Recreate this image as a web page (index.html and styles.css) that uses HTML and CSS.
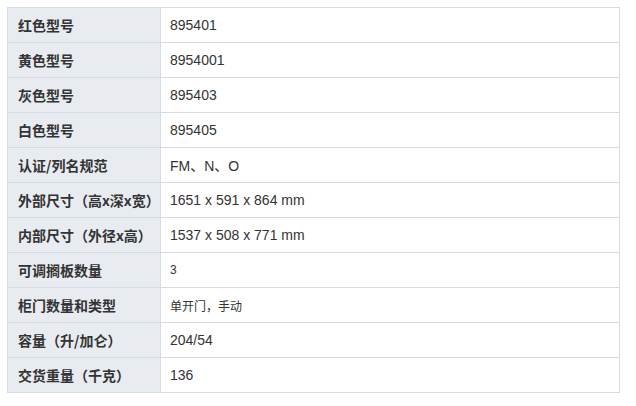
FILE: index.html
```html
<!DOCTYPE html>
<html lang="zh">
<head>
<meta charset="utf-8">
<link rel="stylesheet" href="styles.css">
</head>
<body>
<table class="spec">
  <tr><th>红色型号</th><td>895401</td></tr>
  <tr><th>黄色型号</th><td>8954001</td></tr>
  <tr><th>灰色型号</th><td>895403</td></tr>
  <tr><th>白色型号</th><td>895405</td></tr>
  <tr><th>认证/列名规范</th><td>FM、N、O</td></tr>
  <tr><th>外部尺寸（高x深x宽）</th><td>1651 x 591 x 864 mm</td></tr>
  <tr><th>内部尺寸（外径x高）</th><td>1537 x 508 x 771 mm</td></tr>
  <tr><th>可调搁板数量</th><td class="small">3</td></tr>
  <tr><th>柜门数量和类型</th><td class="small">单开门，手动</td></tr>
  <tr><th>容量（升/加仑）</th><td>204/54</td></tr>
  <tr><th>交货重量（千克）</th><td>136</td></tr>
</table>
</body>
</html>
```
FILE: styles.css
```css
html, body {
  margin: 0;
  padding: 0;
  background: #fff;
}
.spec {
  margin: 7px 0 0 7px;
  width: 613px;
  border-collapse: collapse;
  font-family: "Liberation Sans", Arial, "Noto Sans CJK SC", sans-serif;
  font-size: 14px;
  color: #333;
}
.spec th, .spec td {
  border: 1px solid #d3dce4;
  height: 35px;
  padding: 0 0 0 9px;
  text-align: left;
  vertical-align: middle;
  box-sizing: border-box;
}
.spec th {
  width: 153px;
  padding-left: 10px;
  background: #e8ecf0;
  font-weight: bold;
  font-family: "Noto Sans CJK SC", sans-serif;
  white-space: nowrap;
}
.spec td.small {
  font-size: 12px;
}
```
